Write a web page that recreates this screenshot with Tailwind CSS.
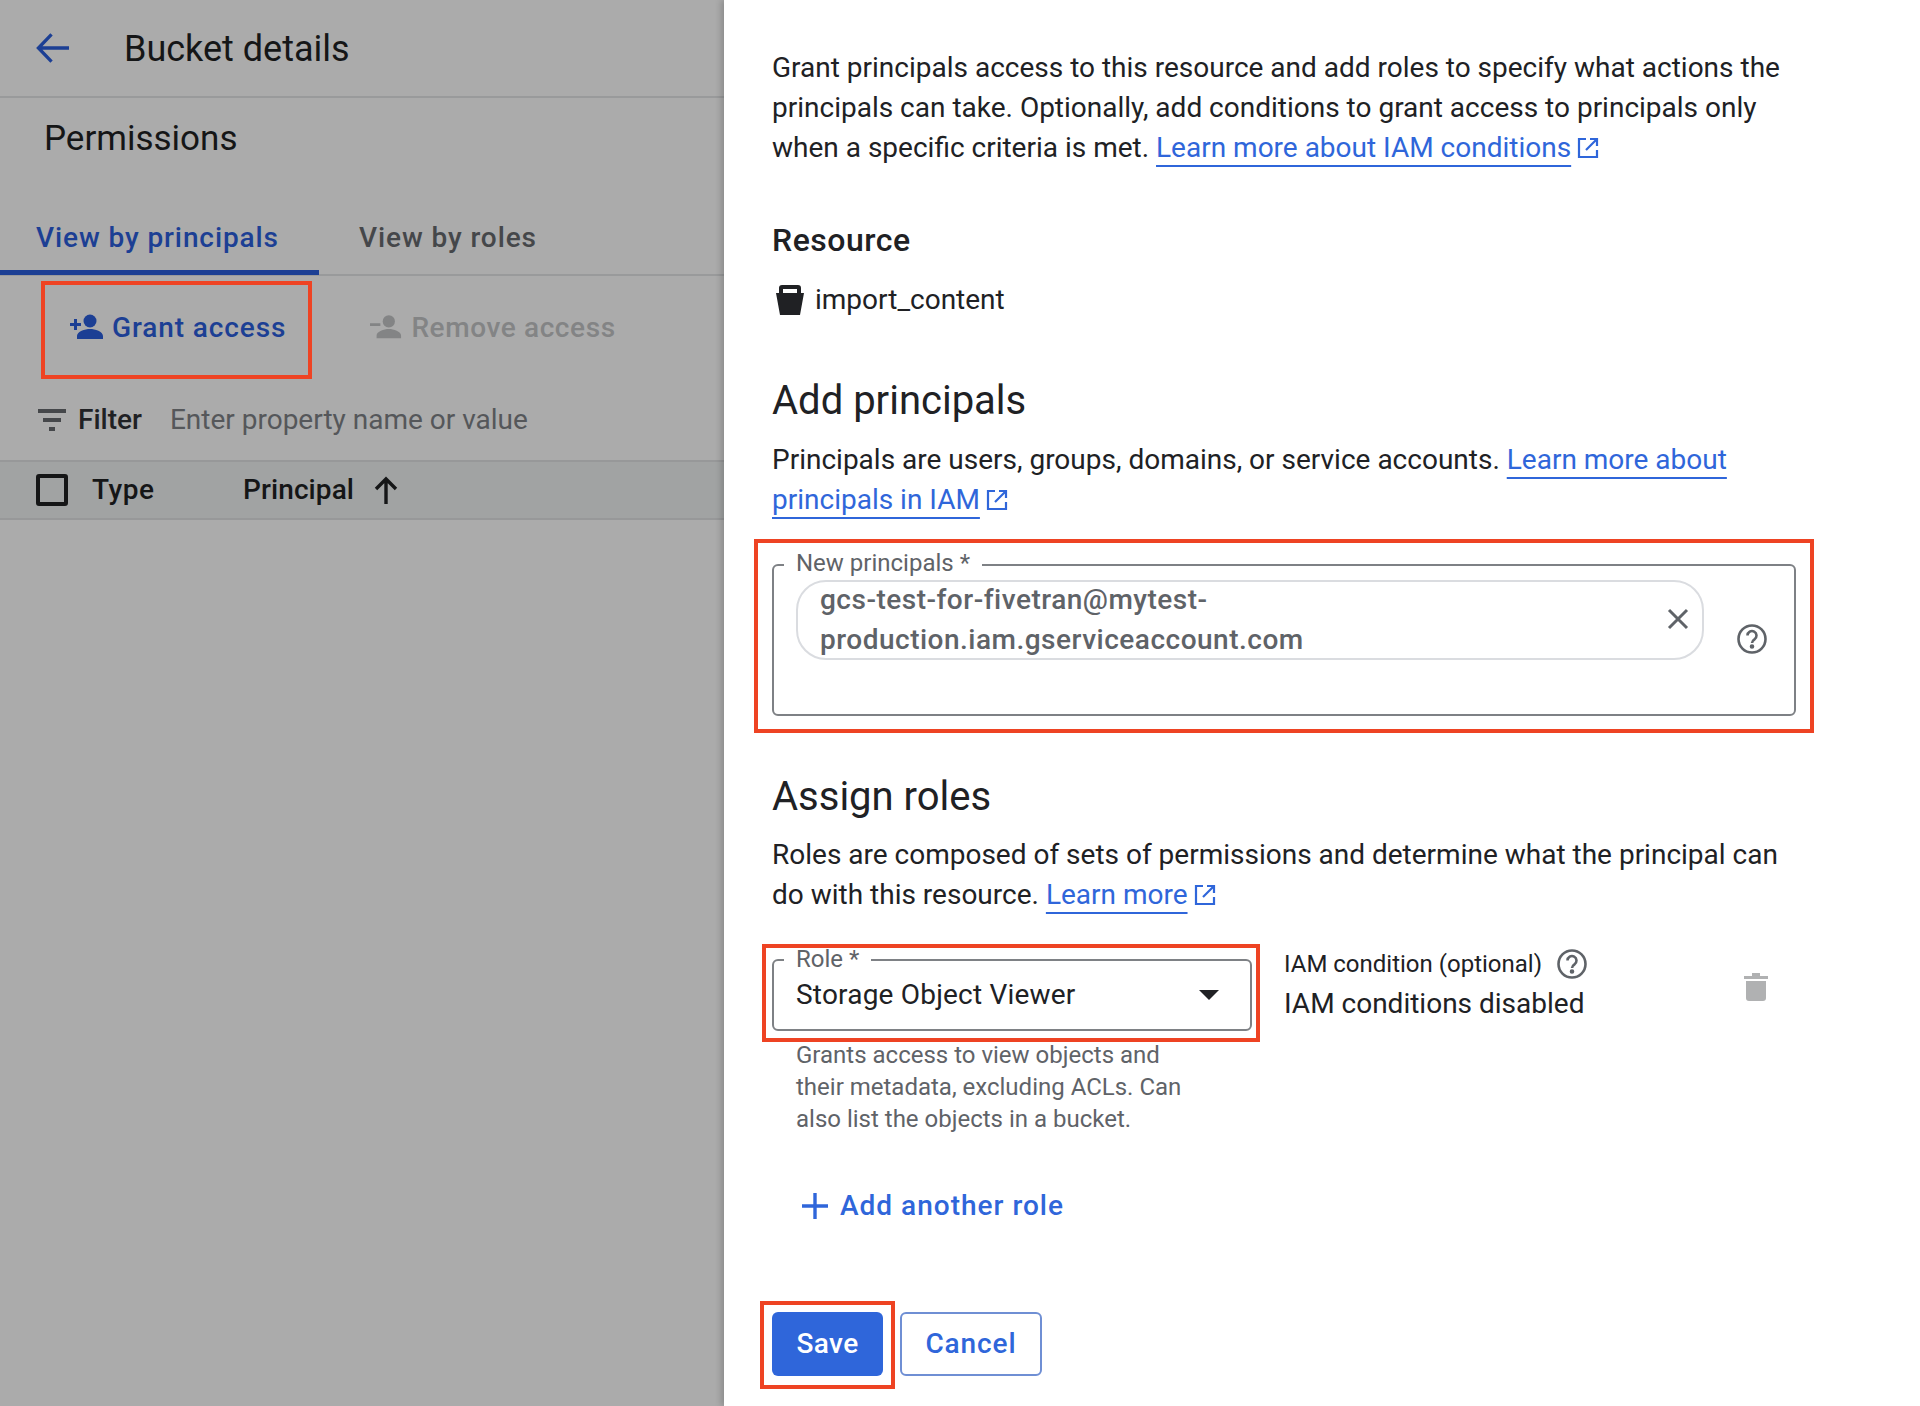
<!DOCTYPE html>
<html><head><meta charset="utf-8"><script src="https://cdn.jsdelivr.net/npm/@tailwindcss/browser@4"></script></head>
<body class="m-0">
<div class="relative flex w-[1920px] h-[1406px] overflow-hidden bg-white font-['Roboto',sans-serif] text-[28px] leading-[40px] text-[#202124]">
  <aside class="w-[724px] h-full shrink-0 bg-[#ababab] text-[#151617]">
    <header class="h-[98px] flex items-center border-b-2 border-[#999a9b] pl-[36px]">
      <svg class="w-[33px] h-[32px]" viewBox="0 0 34 32" fill="none" stroke="#1c3f94" stroke-width="3.4"><path d="M34 16H3M16 2 2.500 16 16 30"/></svg>
      <h1 class="ml-[55px] pt-[1px] text-[36px] font-normal leading-[48px]">Bucket details</h1>
    </header>
    <h2 class="pl-[44px] pt-[17px] text-[35px] font-normal leading-[48px]">Permissions</h2>
    <nav class="mt-[53px] h-[60px] flex border-b-2 border-[#999a9b] text-[28px] font-medium tracking-[0.9px]">
      <div class="w-[319px] h-[59px] pl-[36px] pt-[2px] border-b-[5px] border-[#1c3f94] text-[#1c3f94]">View by principals</div>
      <div class="pl-[40px] pt-[2px] text-[#45474a]">View by roles</div>
    </nav>
    <div class="h-[122px] flex pl-[70px] pt-[32px] font-medium tracking-[0.9px]">
      <div class="flex h-[40px] items-center text-[#1c3f94]">
        <svg class="w-[34px] h-[34px]" viewBox="0 0 34 34" fill="#1c3f94"><circle cx="20" cy="10" r="6.500"/><path d="M7 28v-3c0-4.500 8-7 13-7s13 2.500 13 7v3zM0 12h4V8h3v4h4v3H7v4H4v-4H0z"/></svg>
        <span class="ml-[8px]">Grant access</span>
      </div>
      <div class="flex h-[40px] items-center ml-[84px] text-[#838485] tracking-[0.6px]">
        <svg class="w-[32px] h-[32px]" viewBox="0 0 34 34" fill="#838485"><circle cx="20" cy="10" r="6.500"/><path d="M7 28v-3c0-4.500 8-7 13-7s13 2.500 13 7v3zM0 12h11v3H0z"/></svg>
        <span class="ml-[9px]">Remove access</span>
      </div>
    </div>
    <div class="h-[62px] flex items-center pl-[38px] pb-[18px]">
      <svg class="w-[28px] h-[22px]" viewBox="0 0 28 22" fill="#45474a"><path d="M0 0h28v4H0zM5 9h18v4H5zM11 18h6v4h-6z"/></svg>
      <span class="ml-[12px] font-medium text-[#202124]">Filter</span>
      <span class="ml-[28px] text-[#55575a]">Enter property name or value</span>
    </div>
    <div class="h-[60px] flex items-center pl-[36px] border-y-2 border-[#979899] bg-[#a1a3a3] font-medium">
      <span class="w-[32px] h-[32px] border-[4px] border-[#151617] rounded-[3px]"></span>
      <span class="ml-[24px] w-[151px] tracking-[0.5px]">Type</span>
      <span class="tracking-[0.1px]">Principal</span>
      <svg class="ml-[20px] w-[24px] h-[28px]" viewBox="0 0 24 28" fill="none" stroke="#151617" stroke-width="3.4"><path d="M12 28V3M2 13 12 3l10 10"/></svg>
    </div>
  </aside>

  <main class="relative flex-1 pl-[48px] pr-[110px] shadow-[-3px_0_6px_rgba(0,0,0,0.18)]">
    <p class="pt-[48px]">Grant principals access to this resource and add roles to specify what actions the principals can take. Optionally, add conditions to grant access to principals only when a specific criteria is met. <a class="text-[#2f66da] underline decoration-2 underline-offset-[8px] [text-decoration-skip-ink:none]">Learn more about IAM conditions</a><svg class="inline-block ml-[6px] w-[22px] h-[22px] align-[-2px]" viewBox="0 0 22 22" fill="none" stroke="#2f66da" stroke-width="2.200"><path d="M9 2H2v18h18v-7M13 2h7v7M20 2 9 13"/></svg></p>
    <h3 class="mt-[52px] font-medium text-[#202124] text-[32px] tracking-[0.5px]">Resource</h3>
    <div class="mt-[20px] flex items-center h-[40px]">
      <svg class="w-[28px] h-[30px] ml-[4px]" viewBox="0 0 28 30" fill="#202124"><path fill-rule="evenodd" d="M6 0h16a3 3 0 0 1 3 3v5h3l-4 22H4L0 8h3V3a3 3 0 0 1 3-3zM7 4v4h14V4z"/></svg>
      <span class="ml-[11px]">import_content</span>
    </div>
    <h3 class="mt-[57px] text-[40px] leading-[48px] font-normal">Add principals</h3>
    <p class="mt-[15px]">Principals are users, groups, domains, or service accounts. <a class="text-[#2f66da] underline decoration-2 underline-offset-[8px] [text-decoration-skip-ink:none]">Learn more about principals in IAM</a><svg class="inline-block ml-[6px] w-[22px] h-[22px] align-[-2px]" viewBox="0 0 22 22" fill="none" stroke="#2f66da" stroke-width="2.200"><path d="M9 2H2v18h18v-7M13 2h7v7M20 2 9 13"/></svg></p>

    <div class="relative mt-[44px] w-[1024px] h-[152px] border-2 border-[#7e8185] rounded-[6px]">
      <span class="absolute left-[10px] -top-[19px] bg-white px-[12px] text-[24px] leading-[32px] text-[#5f6368]">New principals *</span>
      <div class="absolute left-[22px] top-[14px] w-[908px] h-[80px] border-2 border-[#dadce0] rounded-[30px] pl-[22px] font-medium text-[#5f6368]">
        <div class="-mt-[2px] tracking-[0.5px]">gcs-test-for-fivetran@mytest-<br>production.iam.gserviceaccount.com</div>
        <svg class="absolute right-[13px] top-[26px] w-[22px] h-[22px]" viewBox="0 0 22 22" fill="none" stroke="#5f6368" stroke-width="3"><path d="M2 2 20 20M20 2 2 20"/></svg>
      </div>
      <svg class="absolute left-[963px] top-[58px] w-[30px] h-[30px]" viewBox="0 0 30 30" fill="none" stroke="#5f6368" stroke-width="2.600"><circle cx="15" cy="15" r="13.500"/><path d="M10.500 11.500a4.500 4.500 0 1 1 7 3.800c-1.500 1-2.500 1.700-2.500 3.700"/><circle cx="15" cy="22.500" r="1" fill="#5f6368"/></svg>
    </div>

    <h3 class="mt-[57px] text-[40px] leading-[48px] font-normal">Assign roles</h3>
    <p class="mt-[14px]">Roles are composed of sets of permissions and determine what the principal can do with this resource. <a class="text-[#2f66da] underline decoration-2 underline-offset-[8px] [text-decoration-skip-ink:none]">Learn more</a><svg class="inline-block ml-[6px] w-[22px] h-[22px] align-[-2px]" viewBox="0 0 22 22" fill="none" stroke="#2f66da" stroke-width="2.200"><path d="M9 2H2v18h18v-7M13 2h7v7M20 2 9 13"/></svg></p>

    <div class="relative flex mt-[44px]">
      <div class="w-[480px] shrink-0">
        <div class="relative h-[72px] border-2 border-[#7e8185] rounded-[6px] pl-[22px] pr-[31px] flex items-center justify-between">
          <span class="absolute left-[10px] -top-[18px] bg-white px-[12px] text-[24px] leading-[32px] text-[#5f6368]">Role *</span>
          <span class="tracking-[0.2px]">Storage Object Viewer</span>
          <svg class="w-[20px] h-[10px]" viewBox="0 0 20 10" fill="#202124"><path d="M0 0h20L10 10z"/></svg>
        </div>
        <p class="mt-[8px] pl-[24px] pr-[40px] text-[24px] leading-[32px] text-[#5f6368]">Grants access to view objects and their metadata, excluding ACLs. Can also list the objects in a bucket.</p>
      </div>
      <div class="ml-[32px] -mt-[15px]">
        <div class="flex items-center text-[24px] leading-[40px]">IAM condition (optional)
          <svg class="ml-[15px] w-[30px] h-[30px]" viewBox="0 0 30 30" fill="none" stroke="#5f6368" stroke-width="2.600"><circle cx="15" cy="15" r="13.500"/><path d="M10.500 11.500a4.500 4.500 0 1 1 7 3.800c-1.500 1-2.500 1.700-2.500 3.700"/><circle cx="15" cy="22.500" r="1" fill="#5f6368"/></svg>
        </div>
        <div>IAM conditions disabled</div>
      </div>
      <svg class="absolute left-[972px] top-[14px] w-[24px] h-[28px]" viewBox="0 0 24 28" fill="#b0b1b2"><path d="M0 3h8V0h8v3h8v3H0zM2 8h20v17a3 3 0 0 1-3 3H5a3 3 0 0 1-3-3z"/></svg>
    </div>

    <div class="flex items-center mt-[51px] ml-[30px] font-medium text-[#2f66da] tracking-[1px]">
      <svg class="w-[26px] h-[26px]" viewBox="0 0 26 26" fill="none" stroke="#2f66da" stroke-width="3.400"><path d="M13 0v26M0 13h26"/></svg>
      <span class="ml-[12px]">Add another role</span>
    </div>

    <div class="flex mt-[86px] gap-[17px] font-medium tracking-[0.4px]">
      <div class="w-[111px] h-[64px] bg-[#2f66da] text-white rounded-[6px] flex items-center justify-center">Save</div>
      <div class="w-[142px] h-[64px] border-2 border-[#6f8fd4] text-[#2f66da] rounded-[6px] flex items-center justify-center tracking-[0.9px]">Cancel</div>
    </div>
  </main>

  <div class="absolute left-[41px] top-[281px] w-[271px] h-[98px] border-4 border-[#ee4323]"></div>
  <div class="absolute left-[754px] top-[539px] w-[1060px] h-[194px] border-4 border-[#ee4323]"></div>
  <div class="absolute left-[762px] top-[944px] w-[498px] h-[98px] border-4 border-[#ee4323]"></div>
  <div class="absolute left-[760px] top-[1301px] w-[135px] h-[88px] border-4 border-[#ee4323]"></div>
</div>
</body></html>
